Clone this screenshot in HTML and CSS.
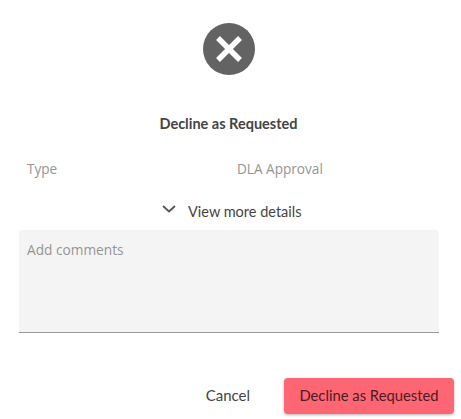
FILE: index.html
```html
<!DOCTYPE html>
<html lang="en">
<head>
<meta charset="utf-8">
<title>Decline as Requested</title>
<link rel="stylesheet" href="styles.css">
</head>
<body>
<main class="dialog">
  <svg class="status-icon" width="52" height="52" viewBox="0 0 52 52" aria-hidden="true">
    <circle cx="26" cy="26" r="26" fill="#636363"/>
    <path d="M15 15 L37 37 M37 15 L15 37" stroke="#fff" stroke-width="5.4" stroke-linecap="butt" fill="none"/>
  </svg>
  <h1 class="title">Decline as Requested</h1>
  <div class="detail-row">
    <span class="detail-label">Type</span>
    <span class="detail-value">DLA Approval</span>
  </div>
  <div class="more">
    <svg class="chevron" width="14" height="8" viewBox="0 0 14 8" aria-hidden="true">
      <path d="M1 1 L7 6.5 L13 1" stroke="#555" stroke-width="1.8" fill="none"/>
    </svg>
    <span class="more-text">View more details</span>
  </div>
  <div class="comments">Add comments</div>
  <div class="actions">
    <button class="btn-cancel" type="button">Cancel</button>
    <button class="btn-decline" type="button">Decline as Requested</button>
  </div>
</main>
</body>
</html>
```

FILE: styles.css
```css
* { box-sizing: border-box; }
html, body { margin: 0; padding: 0; background: #fff; }
body { width: 461px; height: 419px; overflow: hidden; font-family: "Lato", "Liberation Sans", sans-serif; }
.dialog { display: flex; flex-direction: column; padding: 23px 22px 0 19px; height: 419px; }
.status-icon { display: block; align-self: flex-start; margin-left: 184px; }
.title { margin: 40px 0 0; height: 18px; font-size: 14.5px; line-height: 18px; font-weight: 700; color: #444; text-align: center; padding-right: 1px; }
.detail-row { display: flex; margin-top: 26px; height: 20px; font-family: "Open Sans", sans-serif; font-size: 13.6px; line-height: 20px; color: #949494; padding-left: 8px; }
.detail-label { width: 210px; }
.more { display: flex; align-items: center; height: 20px; margin-top: 22px; padding-left: 143px; }
.chevron { margin-right: 12px; margin-top: -4px; }
.more-text { font-size: 14.5px; color: #444; }
.comments { width: 420px; height: 103px; margin-top: 9px; padding: 10px 8px; background: #f4f4f4; border-bottom: 1px solid #999; border-radius: 4px 4px 0 0; font-family: "Open Sans", sans-serif; font-size: 13.7px; line-height: 20px; color: #949494; }
.actions { display: flex; justify-content: flex-end; align-items: center; margin-top: 45px; margin-right: -15px; }
.btn-cancel { border: 0; background: none; padding: 0 0 2px; margin-right: 34px; font: inherit; font-size: 15px; color: #444; }
.btn-decline { width: 170px; height: 36px; border: 0; border-radius: 4px; background: #ff6673; color: #4a1c22; font: inherit; font-size: 14.8px; box-shadow: 0 1px 3px rgba(0,0,0,.3); padding: 0 0 2px; }
```
